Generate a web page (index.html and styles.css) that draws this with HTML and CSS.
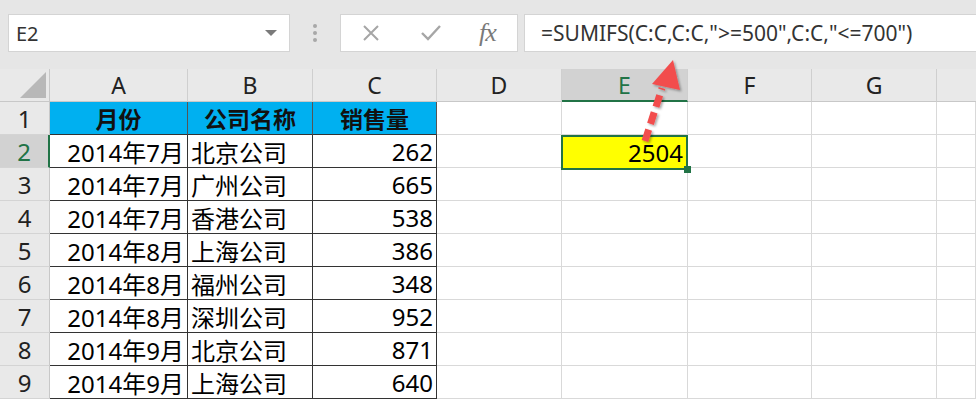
FILE: index.html
```html
<!DOCTYPE html>
<html>
<head>
<meta charset="utf-8">
<link rel="stylesheet" href="styles.css">
</head>
<body>
<div class="app">
  <div class="topbar">
    <div class="namebox"><span class="nb-text">E2</span><span class="nb-caret"></span></div>
    <div class="grip"><i></i><i></i><i></i></div>
    <div class="fxbox">
      <svg class="ic" width="20" height="20" viewBox="0 0 20 20"><path d="M3 3 L17 17 M17 3 L3 17" stroke="#a6a6a6" stroke-width="2" fill="none"/></svg>
      <svg class="ic" width="22" height="20" viewBox="0 0 22 20"><path d="M2 10 L8 16 L20 3" stroke="#a6a6a6" stroke-width="2.4" fill="none"/></svg>
      <span class="fx">fx</span>
    </div>
    <div class="formula">=SUMIFS(C:C,C:C,"&gt;=500",C:C,"&lt;=700")</div>
  </div>
  <div class="sheet">
    <div class="grid">
      <div class="corner"><span class="tri"></span></div>
      <div class="ch">A</div><div class="ch">B</div><div class="ch">C</div><div class="ch">D</div><div class="ch sel">E</div><div class="ch">F</div><div class="ch">G</div><div class="ch last"></div>

      <div class="rh">1</div>
      <div class="c hd">月份</div><div class="c hd">公司名称</div><div class="c hd">销售量</div><div class="c"></div><div class="c"></div><div class="c"></div><div class="c"></div><div class="c"></div>

      <div class="rh rsel">2</div>
      <div class="c d r">2014年7月</div><div class="c d l">北京公司</div><div class="c d r">262</div><div class="c"></div><div class="c active">2504<span class="handle"></span></div><div class="c"></div><div class="c"></div><div class="c"></div>

      <div class="rh">3</div>
      <div class="c d r">2014年7月</div><div class="c d l">广州公司</div><div class="c d r">665</div><div class="c"></div><div class="c"></div><div class="c"></div><div class="c"></div><div class="c"></div>

      <div class="rh">4</div>
      <div class="c d r">2014年7月</div><div class="c d l">香港公司</div><div class="c d r">538</div><div class="c"></div><div class="c"></div><div class="c"></div><div class="c"></div><div class="c"></div>

      <div class="rh">5</div>
      <div class="c d r">2014年8月</div><div class="c d l">上海公司</div><div class="c d r">386</div><div class="c"></div><div class="c"></div><div class="c"></div><div class="c"></div><div class="c"></div>

      <div class="rh">6</div>
      <div class="c d r">2014年8月</div><div class="c d l">福州公司</div><div class="c d r">348</div><div class="c"></div><div class="c"></div><div class="c"></div><div class="c"></div><div class="c"></div>

      <div class="rh">7</div>
      <div class="c d r">2014年8月</div><div class="c d l">深圳公司</div><div class="c d r">952</div><div class="c"></div><div class="c"></div><div class="c"></div><div class="c"></div><div class="c"></div>

      <div class="rh">8</div>
      <div class="c d r">2014年9月</div><div class="c d l">北京公司</div><div class="c d r">871</div><div class="c"></div><div class="c"></div><div class="c"></div><div class="c"></div><div class="c"></div>

      <div class="rh">9</div>
      <div class="c d r">2014年9月</div><div class="c d l">上海公司</div><div class="c d r">640</div><div class="c"></div><div class="c"></div><div class="c"></div><div class="c"></div><div class="c"></div>
    </div>
    <svg class="arrow" width="976" height="400" viewBox="0 0 976 400">
      <defs>
        <filter id="sh" x="-20%" y="-20%" width="140%" height="140%">
          <feDropShadow dx="1.5" dy="1.5" stdDeviation="1.2" flood-color="#000" flood-opacity="0.35"/>
        </filter>
      </defs>
      <g filter="url(#sh)">
        <line x1="645" y1="141" x2="662" y2="88" stroke="#f24d4d" stroke-width="7" stroke-dasharray="12 6"/>
        <polygon points="673,60 652,84 680,90" fill="#f24d4d"/>
      </g>
    </svg>
  </div>
</div>
</body>
</html>
```

FILE: styles.css
```css
* { box-sizing: border-box; }
html, body { margin: 0; padding: 0; background: #fff; }
body { font-family: "Noto Sans", "Noto Sans CJK SC", sans-serif; }
.app { width: 976px; height: 400px; overflow: hidden; position: relative; }

.topbar {
  height: 69px;
  background: #e6e6e6;
  display: flex;
  align-items: flex-start;
  padding-top: 14px;
  padding-left: 8px;
}
.namebox {
  width: 282px; height: 38px;
  background: #fff;
  border: 1px solid #d4d4d4;
  display: flex; align-items: center; justify-content: space-between;
  padding: 0 12px 0 7px;
}
.nb-text { font-size: 20px; color: #333; }
.nb-caret {
  width: 0; height: 0;
  border-left: 6px solid transparent;
  border-right: 6px solid transparent;
  border-top: 6px solid #7a7a7a;
}
.grip {
  width: 50px; height: 38px;
  display: flex; flex-direction: column; align-items: center; justify-content: center; gap: 3px;
}
.grip i { display: block; width: 4px; height: 4px; border-radius: 2px; background: #a8a8a8; }
.fxbox {
  width: 178px; height: 38px;
  background: #fff;
  border: 1px solid #d4d4d4;
  display: flex; align-items: center;
  padding-left: 20px; gap: 39px;
}
.ic { display: block; }
.fx {
  font-family: "Liberation Serif", "DejaVu Serif", serif;
  font-style: italic; font-size: 26px; color: #7a7a7a; margin-left: -2px;
  letter-spacing: -1px;
}
.formula {
  margin-left: 6px;
  flex: 1;
  height: 38px;
  background: #fff;
  border: 1px solid #d4d4d4;
  border-right: none;
  font-size: 21px; color: #333;
  display: flex; align-items: center;
  padding-left: 16px;
  white-space: nowrap;
}

.grid {
  display: grid;
  grid-template-columns: 50px 138px 125px 124px 125px 126px 124px 125px 39px;
  grid-template-rows: 33px repeat(9, 33px);
}
.corner {
  background: #e9e9e9;
  border-right: 1px solid #c8c8c8;
  border-bottom: 1px solid #c8c8c8;
  position: relative;
}
.tri {
  position: absolute; right: 3px; bottom: 3px;
  width: 0; height: 0;
  border-left: 26px solid transparent;
  border-bottom: 26px solid #b8b8b8;
}
.ch {
  background: #e9e9e9;
  border-right: 1px solid #cfcfcf;
  border-bottom: 1px solid #c8c8c8;
  font-size: 23px; color: #222;
  display: flex; align-items: center; justify-content: center;
}
.ch.sel { background: #d2d2d2; color: #217346; border-bottom: 2px solid #217346; }
.ch.last { border-right: none; }
.rh {
  background: #e9e9e9;
  border-right: 1px solid #c8c8c8;
  border-bottom: 1px solid #d4d4d4;
  font-size: 24px; color: #222;
  display: flex; align-items: center; justify-content: center;
}
.rh.rsel { background: #d2d2d2; color: #217346; border-right: 2px solid #217346; }
.c {
  border-right: 1px solid #d9d9d9;
  border-bottom: 1px solid #d9d9d9;
  font-size: 24px; color: #000;
  display: flex; align-items: center;
  padding: 0 3px;
  white-space: nowrap;
  position: relative;
}
.c.hd {
  background: #00b0f0;
  font-family: "Noto Sans CJK SC", sans-serif;
  font-weight: 700; font-size: 23px; color: #111;
  justify-content: center;
  border-right: 1px solid #555;
  border-bottom: 1px solid #333;
}
.c.d { border-right: 1px solid #333; border-bottom: 1px solid #333; }
.c.r { justify-content: flex-end; }
.c.l { justify-content: flex-start; }
.c.active {
  background: #ffff00;
  border: 2px solid #217346;
  margin: 0 0 -2px -1px;
  justify-content: flex-end;
  padding-right: 3px;
  z-index: 1;
}
.handle {
  position: absolute; right: -5px; bottom: -5px;
  width: 7px; height: 7px; background: #217346;
}
.sheet { position: relative; }
.arrow { position: absolute; left: 0; top: -69px; pointer-events: none; z-index: 2; }
```
